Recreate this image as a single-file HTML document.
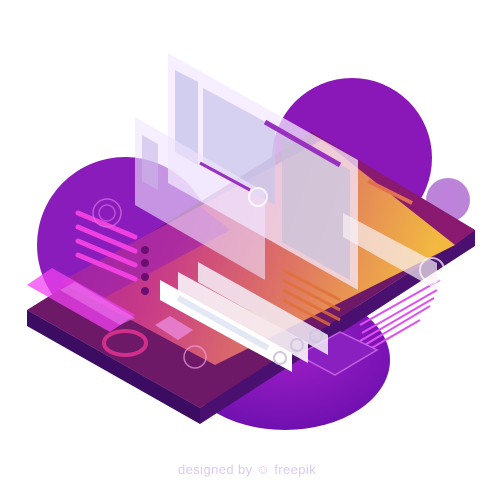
<!DOCTYPE html>
<html><head><meta charset="utf-8"><style>
html,body{margin:0;padding:0;background:#fff;width:500px;height:500px;overflow:hidden}
</style></head><body>
<svg width="500" height="500" viewBox="0 0 500 500" xmlns="http://www.w3.org/2000/svg">
<defs>
<linearGradient id="scr" x1="0" y1="0" x2="1" y2="0.2">
<stop offset="0" stop-color="#a0209a"/><stop offset="0.35" stop-color="#c83a88"/><stop offset="0.7" stop-color="#e07a60"/><stop offset="1" stop-color="#f2b840"/>
</linearGradient>
<radialGradient id="blob" cx="0.5" cy="0.4" r="0.6">
<stop offset="0" stop-color="#a020c8"/><stop offset="1" stop-color="#7010b0"/>
</radialGradient>
</defs>
<circle cx="352" cy="158" r="80" fill="#8a18b8"/>
<circle cx="125" cy="245" r="88" fill="#8a1cbc"/>
<ellipse cx="285" cy="360" rx="105" ry="70" fill="url(#blob)"/>
<circle cx="448" cy="200" r="22" fill="#a050c8" opacity="0.7"/>
<circle cx="448" cy="200" r="12" fill="#c080e0" opacity="0.6"/>
<!-- tablet body -->
<polygon points="27,310 200,408 200,424 27,326" fill="#3c0c62"/>
<polygon points="200,408 475,230 475,246 200,424" fill="#4a1070"/>
<polygon points="27,310 312,132 475,230 200,408" fill="#6e1868"/>
<polygon points="312,132 475,230 455,245 320,160" fill="#8a1a70"/>
<!-- screen -->
<polygon points="60,282 322,140 455,245 215,365" fill="url(#scr)"/>
<polygon points="60,282 200,206 230,230 100,300" fill="#9a22b0" opacity="0.6"/>
<g stroke="#f040e0" stroke-width="5" stroke-linecap="round">
<line x1="78" y1="213" x2="135" y2="237"/>
<line x1="78" y1="227" x2="135" y2="251"/>
<line x1="78" y1="241" x2="135" y2="265"/>
<line x1="78" y1="255" x2="135" y2="279"/>
</g>
<g fill="#6a0e70"><circle cx="145" cy="250" r="4"/><circle cx="145" cy="263" r="4"/><circle cx="145" cy="277" r="4"/><circle cx="145" cy="291" r="4"/></g>
<circle cx="107" cy="213" r="14" fill="none" stroke="#e070e0" stroke-width="1.5" opacity="0.7"/>
<circle cx="107" cy="213" r="8" fill="none" stroke="#e070e0" stroke-width="1.5" opacity="0.6"/>
<ellipse cx="125" cy="343" rx="21" ry="12" fill="none" stroke="#d0308a" stroke-width="4"/>
<g stroke="#e07038" stroke-width="3" opacity="0.8">
<line x1="283" y1="270" x2="340" y2="300"/><line x1="283" y1="280" x2="340" y2="310"/>
<line x1="283" y1="290" x2="340" y2="320"/><line x1="283" y1="300" x2="330" y2="325"/>
</g>
<line x1="368" y1="181" x2="412" y2="203" stroke="#e07050" stroke-width="4"/>
<g stroke="#e050f0" stroke-width="2">
<line x1="360" y1="325" x2="440" y2="280"/><line x1="362" y1="333" x2="437" y2="290"/>
<line x1="360" y1="341" x2="434" y2="298"/><line x1="358" y1="349" x2="430" y2="306"/>
<line x1="356" y1="357" x2="420" y2="320"/>
</g>
<polygon points="298,355 340,332 377,350 335,375" fill="#8a20c0" stroke="#c060e0" stroke-width="1.5"/>
<!-- magenta layer -->
<polygon points="27,285 52,268 135,315 110,332" fill="#f040f0" opacity="0.75"/>
<polygon points="60,290 75,282 135,318 120,325" fill="#f080f0" opacity="0.5"/>
<polygon points="155,325 170,316 193,330 178,340" fill="#f090e8" opacity="0.7"/>
<!-- panels -->
<polygon points="168,53 358,160 358,290 168,183" fill="#f4eaff" opacity="0.75"/>
<polygon points="175,70 198,82 198,165 175,152" fill="#c0c0e8" opacity="0.7"/>
<polygon points="203,88 275,127 275,205 203,167" fill="#c8c4ea" opacity="0.7"/>
<polygon points="282,132 350,170 350,280 282,242" fill="#c8c0d8" opacity="0.7"/>
<line x1="265" y1="122" x2="340" y2="165" stroke="#9a30c0" stroke-width="5"/>
<polygon points="135,117 265,192 265,280 135,205" fill="#f0e4ff" opacity="0.6"/>
<polygon points="142,135 158,144 158,190 142,181" fill="#c8b8e8" opacity="0.6"/>
<line x1="200" y1="163" x2="250" y2="190" stroke="#9a30c0" stroke-width="3"/>
<polygon points="343,213 437,263 437,290 343,237" fill="#f8f0f4" opacity="0.7"/>
<circle cx="258" cy="197" r="9" fill="none" stroke="#fff" stroke-width="2" opacity="0.8"/>
<circle cx="432" cy="270" r="12" fill="none" stroke="#fff" stroke-width="2" opacity="0.7"/>
<!-- bars -->
<polygon points="198,262 328,335 328,355 198,282" fill="#f4eef8" opacity="0.85"/>
<polygon points="178,272 308,343 308,363 178,292" fill="#f8f4fa" opacity="0.9"/>
<polygon points="160,280 292,353 292,372 160,300" fill="#ffffff"/>
<line x1="178" y1="298" x2="268" y2="348" stroke="#e4e8f4" stroke-width="6"/>
<circle cx="280" cy="358" r="6" fill="none" stroke="#d0c8e0" stroke-width="2"/>
<circle cx="297" cy="345" r="6" fill="none" stroke="#d0c8e0" stroke-width="2"/>
<circle cx="316" cy="336" r="6" fill="none" stroke="#d0c8e0" stroke-width="2"/>
<circle cx="195" cy="357" r="11" fill="none" stroke="#f0a0e0" stroke-width="1.5" opacity="0.7"/>
<text x="178" y="474" font-family="Liberation Sans, sans-serif" font-size="13" letter-spacing="0.4" fill="#dccaf2">designed by ☺ freepik</text>
</svg>
</body></html>
